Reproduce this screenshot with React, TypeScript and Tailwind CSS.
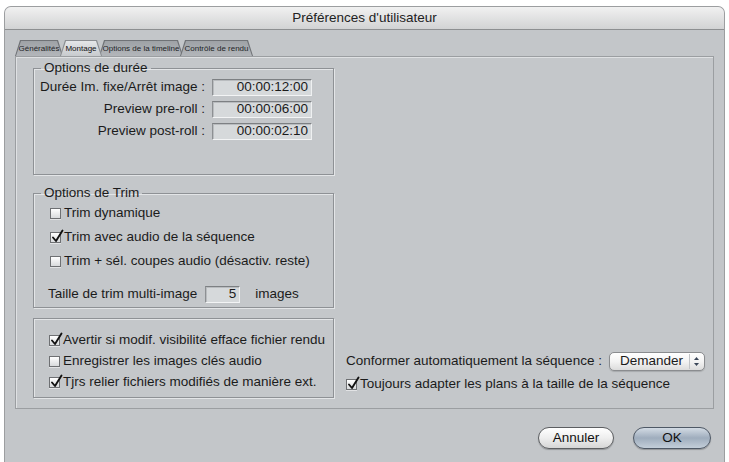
import React from 'react';

const Check = ({ checked }: { checked?: boolean }) => (
  <span className="relative inline-block w-[11px] h-[11px] shrink-0 border border-[#6e7073] bg-gradient-to-b from-[#ffffff] to-[#d9dbdd] shadow-[0_1px_0_rgba(255,255,255,0.5)]">
    {checked && (
      <svg className="absolute -top-[4px] left-[0px]" width="13" height="14" viewBox="0 0 13 14">
        <path d="M2 8.5 L5 12 L11.5 1.5" fill="none" stroke="#111" strokeWidth="1.9" strokeLinecap="round" strokeLinejoin="round" />
      </svg>
    )}
  </span>
);

const CheckRow = ({ checked, label, h }: { checked?: boolean; label: string; h: string }) => (
  <div className={`flex items-center gap-[3px] ${h}`}>
    <Check checked={checked} />
    <span>{label}</span>
  </div>
);

const Field = ({ value, w }: { value: string; w: string }) => (
  <div
    className={`${w} h-[17px] flex items-center justify-end pr-[3px] bg-[#d6d9db] border border-t-[#7d8083] border-l-[#8d9093] border-r-[#eef0f1] border-b-[#f3f4f5] shadow-[inset_1px_1px_0_#b9bcbf]`}
  >
    {value}
  </div>
);

const Tab = ({ label, w, active }: { label: string; w: string; active?: boolean }) => (
  <div
    className={`${w} h-[16px] -mr-[3px] pt-[1px] px-[1px] [clip-path:polygon(5px_0,calc(100%-5px)_0,100%_100%,0_100%)] ${
      active ? 'relative z-10 bg-[#8b8e92]' : 'bg-[#6f7276]'
    }`}
  >
    <div
      className={`h-full flex items-center justify-center text-[8px] whitespace-nowrap [clip-path:polygon(5px_0,calc(100%-5px)_0,100%_100%,0_100%)] ${
        active
          ? 'bg-gradient-to-b from-[#e4e6e8] to-[#c8cbce] text-[#111]'
          : 'bg-gradient-to-b from-[#9ea2a6] to-[#b3b6ba] text-[#222427]'
      }`}
    >
      {label}
    </div>
  </div>
);

const durations = [
  { label: 'Durée Im. fixe/Arrêt image :', value: '00:00:12:00' },
  { label: 'Preview pre-roll :', value: '00:00:06:00' },
  { label: 'Preview post-roll :', value: '00:00:02:10' },
];

const groupBox = 'border border-[#8e9195] shadow-[inset_1px_1px_0_#e3e5e7,1px_1px_0_#e3e5e7]';

export default function App() {
  return (
    <div className="w-[729px] h-[462px] overflow-hidden bg-white font-['Liberation_Sans',Arial,sans-serif] text-[13.5px] text-[#1b1b1b]">
      <div className="ml-[4px] mt-[6px] w-[721px] h-[460px] flex flex-col rounded-t-[7px] border border-b-0 border-[#9c9ea0] bg-[#c3c6c9] overflow-hidden">
        {/* title bar */}
        <div className="h-[23px] shrink-0 flex items-center justify-center border-b border-[#8d8f91] bg-gradient-to-b from-[#f1f1f1] to-[#d2d3d4] text-[13.5px] text-[#222]">
          Préférences d'utilisateur
        </div>

        <div className="px-[10px] pt-[10px]">
          {/* tabs */}
          <div className="flex h-[16px]">
            <Tab label="Généralités" w="w-[48px]" />
            <Tab label="Montage" w="w-[42px]" active />
            <Tab label="Options de la timeline" w="w-[84px]" />
            <Tab label="Contrôle de rendu" w="w-[73px]" />
          </div>

          {/* panel */}
          <div className="h-[353px] border border-[#9b9ea1] bg-[#c4c7ca] shadow-[inset_1px_1px_0_#dfe1e3]">
            <div className="flex h-full">
              <div className="w-[301px] ml-[17px] mt-[3px] shrink-0">
                <fieldset className={`${groupBox} pb-[32px]`}>
                  <legend className="ml-[7px] px-[3px] leading-[16px]">Options de durée</legend>
                  {durations.map((d) => (
                    <div key={d.label} className="grid grid-cols-[171px_100px] gap-x-[7px] h-[22px] items-center">
                      <span className="text-right">{d.label}</span>
                      <Field value={d.value} w="w-[100px]" />
                    </div>
                  ))}
                </fieldset>

                <fieldset className={`${groupBox} mt-[10px] pb-[2px]`}>
                  <legend className="ml-[7px] px-[3px] leading-[16px]">Options de Trim</legend>
                  <div className="pl-[16px]">
                    <CheckRow h="h-[24px]" label="Trim dynamique" />
                    <CheckRow h="h-[24px]" checked label="Trim avec audio de la séquence" />
                    <CheckRow h="h-[24px]" label="Trim + sél. coupes audio (désactiv. reste)" />
                  </div>
                  <div className="flex items-center h-[22px] mt-[10px] pl-[14px]">
                    <span>Taille de trim multi-image</span>
                    <div className="ml-[8px]">
                      <Field value="5" w="w-[35px]" />
                    </div>
                    <span className="ml-[15px]">images</span>
                  </div>
                </fieldset>

                <div className={`${groupBox} mt-[10px] pt-[11px] pb-[4px] pl-[15px]`}>
                  <CheckRow h="h-[21px]" checked label="Avertir si modif. visibilité efface fichier rendu" />
                  <CheckRow h="h-[21px]" label="Enregistrer les images clés audio" />
                  <CheckRow h="h-[21px]" checked label="Tjrs relier fichiers modifiés de manière ext." />
                </div>
              </div>

              <div className="ml-[12px] flex flex-col justify-end pb-[13px]">
                <div className="flex items-center h-[20px]">
                  <span>Conformer automatiquement la séquence :</span>
                  <div className="ml-[7px] w-[96px] h-[19px] flex items-center rounded-[5px] border border-[#8a8c8f] bg-gradient-to-b from-[#ffffff] via-[#f3f3f3] to-[#dcdcdc] shadow-[0_1px_1px_rgba(0,0,0,0.15)]">
                    <span className="flex-1 pl-[10px]">Demander</span>
                    <div className="w-[15px] h-[15px] flex items-center justify-center border-l border-[#c2c4c7]">
                      <svg width="7" height="11" viewBox="0 0 7 11">
                        <path d="M3.5 1 L6 4 L1 4 Z" fill="#3a4658" />
                        <path d="M3.5 10 L6 7 L1 7 Z" fill="#3a4658" />
                      </svg>
                    </div>
                  </div>
                </div>
                <div className="mt-[2px]">
                  <CheckRow h="h-[22px]" checked label="Toujours adapter les plans à la taille de la séquence" />
                </div>
              </div>
            </div>
          </div>

          {/* buttons */}
          <div className="flex justify-end gap-[19px] pr-[3px] mt-[18px]">
            <button className="w-[76px] h-[22px] rounded-full border border-[#5c5e61] bg-gradient-to-b from-[#ffffff] via-[#eeeeee] to-[#d6d6d6] shadow-[0_1px_1px_rgba(0,0,0,0.25)] text-[13.5px] text-[#111]">
              Annuler
            </button>
            <button className="w-[78px] h-[22px] rounded-full border border-[#4e5865] bg-gradient-to-b from-[#d3dbe4] via-[#9fadbd] to-[#c3ced9] shadow-[0_1px_1px_rgba(0,0,0,0.25)] text-[13.5px] text-[#111]">
              OK
            </button>
          </div>
        </div>
      </div>
    </div>
  );
}
